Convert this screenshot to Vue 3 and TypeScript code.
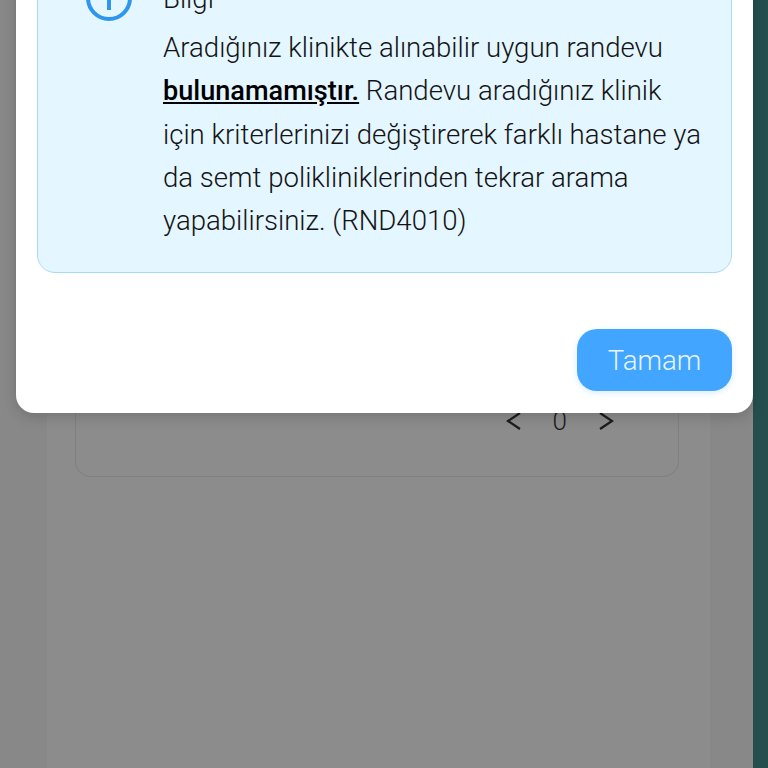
<script setup lang="ts">
const okLabel = 'Tamam'
</script>

<template>
  <div class="page">
    <div class="band band-left"></div>
    <main class="center">
      <section class="card">
        <div class="pager">
          <svg class="chev" viewBox="0 0 16 20" width="16" height="20"><path d="M14 2 2 10l12 8" /></svg>
          <span class="num">0</span>
          <svg class="chev" viewBox="0 0 16 20" width="16" height="20"><path d="M2 2l12 8-12 8" /></svg>
        </div>
      </section>
    </main>
    <div class="band band-right"></div>
    <div class="edge"></div>

    <div class="modal">
      <div class="alert">
        <svg class="info" viewBox="0 0 46 46" width="46" height="46">
          <circle cx="23" cy="23" r="21" />
          <path d="M23 21v14" />
          <path d="M23 12v3" />
        </svg>
        <div class="body">
          <div class="title">Bilgi</div>
          <p class="text">Aradığınız klinikte alınabilir uygun randevu <strong>bulunamamıştır.</strong> Randevu aradığınız klinik için kriterlerinizi değiştirerek farklı hastane ya da semt polikliniklerinden tekrar arama yapabilirsiniz. (RND4010)</p>
        </div>
      </div>
      <div class="actions">
        <button class="ok" type="button">{{ okLabel }}</button>
      </div>
    </div>
  </div>
</template>

<style>
html, body { margin: 0; padding: 0; }
</style>

<style scoped>
.page {
  position: relative;
  display: flex;
  width: 768px;
  height: 768px;
  overflow: hidden;
  font-family: Roboto, "Liberation Sans", sans-serif;
  background: #8c8c8c;
}
.band { flex: none; background: #888888; }
.band-left { width: 47px; }
.band-right { width: 43px; }
.edge { flex: none; width: 15px; background: #254f4f; }
.center { flex: none; width: 663px; background: #8c8c8c; }
.card {
  box-sizing: border-box;
  display: flex;
  flex-direction: column;
  justify-content: flex-end;
  width: 604px;
  height: 477px;
  margin-left: 28px;
  padding: 0 64px 38px 0;
  border: 1px solid #808080;
  border-top: 0;
  border-radius: 0 0 16px 16px;
}
.pager {
  display: flex;
  align-items: center;
  justify-content: flex-end;
  gap: 31px;
  height: 34px;
  color: #1c1c1c;
}
.chev { fill: none; stroke: #1c1c1c; stroke-width: 2.2; }
.num { font-size: 26px; font-weight: 300; line-height: 34px; }
.modal {
  position: absolute;
  top: -80px;
  left: 16px;
  box-sizing: border-box;
  width: 737px;
  height: 493px;
  padding: 21px 21px 22px;
  background: #ffffff;
  border-radius: 0 0 18px 18px;
  box-shadow: 0 4px 14px rgba(0, 0, 0, 0.16);
}
.alert {
  box-sizing: border-box;
  display: flex;
  align-items: flex-start;
  gap: 31px;
  height: 332px;
  padding: 33px 26px 0 48px;
  background: #e4f6ff;
  border: 1.5px solid #a5deee;
  border-radius: 18px;
}
.info { flex: none; fill: none; stroke: #2e96ee; stroke-width: 4; }
.body { flex: 1; min-width: 0; margin-top: 2px; color: #141414; }
.title { font-size: 27.6px; font-weight: 300; line-height: 43px; margin-bottom: 5.5px; }
.text { margin: 0; font-size: 27.6px; font-weight: 300; line-height: 43px; }
.text strong { font-size: 27.1px; font-weight: 500; color: #000; text-decoration: underline; }
.actions { display: flex; justify-content: flex-end; margin-top: 56px; }
.ok {
  width: 155px;
  height: 62px;
  padding: 0;
  border: 0;
  border-radius: 20px;
  background: #42a5ff;
  color: #e8f5ff;
  font-family: inherit;
  font-size: 27.6px;
  font-weight: 300;
  box-shadow: 0 2px 6px rgba(66, 165, 255, 0.2);
}
</style>
